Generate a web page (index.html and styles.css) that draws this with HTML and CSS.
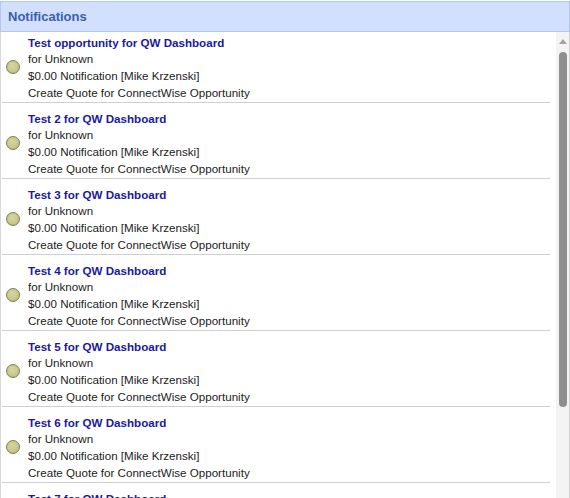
FILE: index.html
```html
<!DOCTYPE html>
<html>
<head>
<meta charset="utf-8">
<link rel="stylesheet" href="styles.css">
</head>
<body>
<div class="widget">
  <div class="header">Notifications</div>
  <div class="body">
    <div class="list">
      <div class="scroller">
        <div class="item"><span class="dot"></span><div class="text"><div class="title">Test opportunity for QW Dashboard</div><div>for Unknown</div><div>$0.00 Notification [Mike Krzenski]</div><div>Create Quote for ConnectWise Opportunity</div></div></div>
        <div class="item"><span class="dot"></span><div class="text"><div class="title">Test 2 for QW Dashboard</div><div>for Unknown</div><div>$0.00 Notification [Mike Krzenski]</div><div>Create Quote for ConnectWise Opportunity</div></div></div>
        <div class="item"><span class="dot"></span><div class="text"><div class="title">Test 3 for QW Dashboard</div><div>for Unknown</div><div>$0.00 Notification [Mike Krzenski]</div><div>Create Quote for ConnectWise Opportunity</div></div></div>
        <div class="item"><span class="dot"></span><div class="text"><div class="title">Test 4 for QW Dashboard</div><div>for Unknown</div><div>$0.00 Notification [Mike Krzenski]</div><div>Create Quote for ConnectWise Opportunity</div></div></div>
        <div class="item"><span class="dot"></span><div class="text"><div class="title">Test 5 for QW Dashboard</div><div>for Unknown</div><div>$0.00 Notification [Mike Krzenski]</div><div>Create Quote for ConnectWise Opportunity</div></div></div>
        <div class="item"><span class="dot"></span><div class="text"><div class="title">Test 6 for QW Dashboard</div><div>for Unknown</div><div>$0.00 Notification [Mike Krzenski]</div><div>Create Quote for ConnectWise Opportunity</div></div></div>
        <div class="item"><span class="dot"></span><div class="text"><div class="title">Test 7 for QW Dashboard</div><div>for Unknown</div><div>$0.00 Notification [Mike Krzenski]</div><div>Create Quote for ConnectWise Opportunity</div></div></div>
      </div>
    </div>
    <div class="scrollbar">
      <div class="arrow"></div>
      <div class="thumb"></div>
    </div>
  </div>
</div>
</body>
</html>
```
FILE: styles.css
```css
html, body {
  margin: 0;
  padding: 0;
  background: #fff;
}
.widget {
  width: 570px;
  height: 498px;
  box-sizing: border-box;
  display: flex;
  flex-direction: column;
  font-family: "Liberation Sans", Arial, sans-serif;
  overflow: hidden;
}
.header {
  height: 31px;
  box-sizing: border-box;
  margin-top: 1px;
  background: #d3e0fd;
  border: 1px solid #b3c6ec;
  color: #3a5eb0;
  font-weight: bold;
  font-size: 13px;
  line-height: 29px;
  padding-left: 7px;
  flex: none;
}
.body {
  flex: 1;
  display: flex;
  min-height: 0;
  border-left: 1px solid #d8d8d8;
  border-right: 1px solid #d0d0d0;
}
.list {
  flex: 1;
  overflow: hidden;
  padding-left: 1px;
  padding-right: 6px;
}
.scroller {
  margin-top: -5px;
}
.item {
  display: flex;
  align-items: center;
  height: 76px;
  box-sizing: border-box;
  border-bottom: 1px solid #cfcfcf;
  padding-top: 7px;
}
.dot {
  flex: none;
  width: 12px;
  height: 12px;
  border-radius: 50%;
  background: radial-gradient(circle at 45% 40%, #d6d8a0 0%, #c4c68a 60%, #a8aa70 100%);
  border: 1px solid #7d7f50;
  margin-left: 4px;
  margin-right: 8px;
  margin-top: -3px;
}
.text {
  font-size: 11.6px;
  line-height: 16.7px;
  color: #222;
}
.title {
  font-weight: bold;
  color: #1a1a9e;
}
.scrollbar {
  flex: none;
  width: 13px;
  background: #f4f4f4;
  display: flex;
  flex-direction: column;
  align-items: center;
}
.arrow {
  width: 0;
  height: 0;
  margin-top: 7px;
  border-left: 4px solid transparent;
  border-right: 4px solid transparent;
  border-bottom: 5px solid #a3a3a3;
}
.thumb {
  width: 8px;
  height: 355px;
  margin-top: 8px;
  border-radius: 4px;
  background: #8e8e8e;
}
```
